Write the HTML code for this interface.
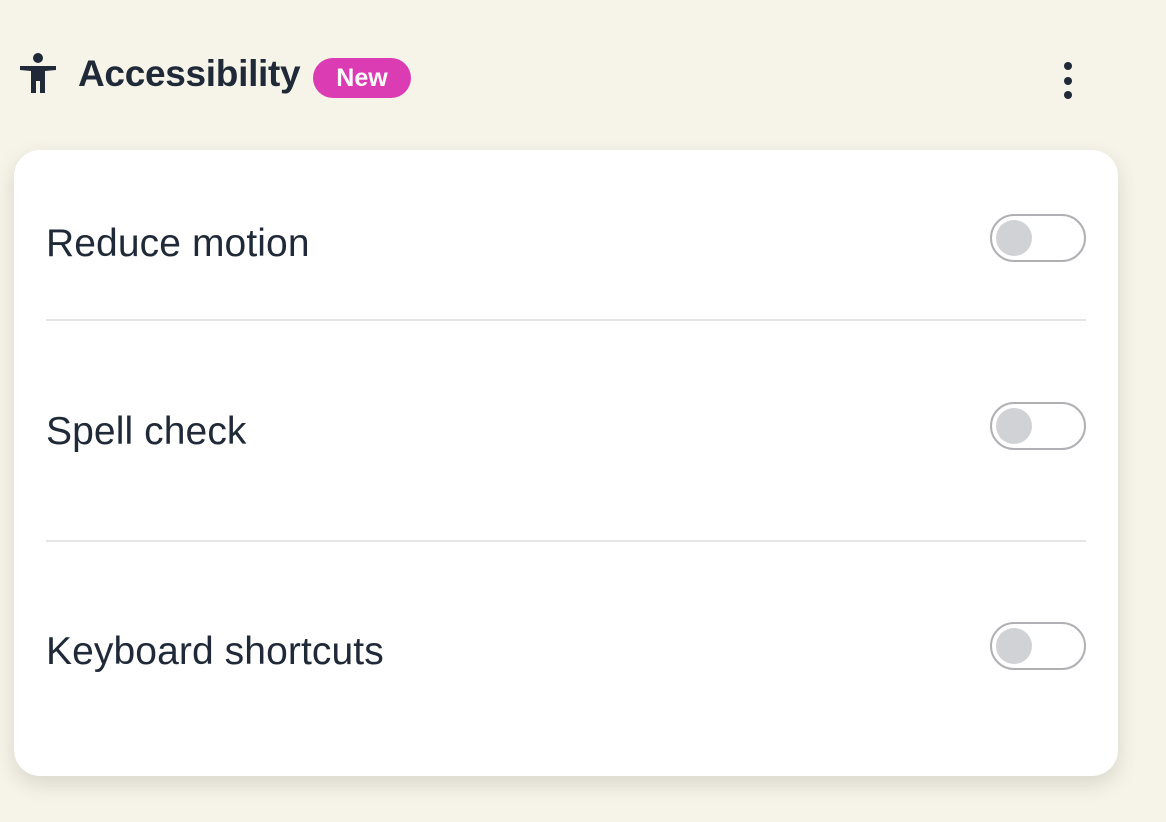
<!DOCTYPE html>
<html><head><style>
body{margin:0;width:1166px;height:822px;background:#f6f4e8;font-family:"Liberation Sans",sans-serif;color:#1f2937;position:relative;overflow:hidden}
.t{position:absolute;left:78px;top:53px;font-size:37px;font-weight:600;letter-spacing:-0.3px}
.badge{position:absolute;left:313px;top:58px;width:98px;height:40px;border-radius:20px;background:#db3cb4;color:#fff;font-size:25px;font-weight:700;text-align:center;line-height:40px}
.card{position:absolute;left:14px;top:150px;width:1104px;height:626px;background:#fff;border-radius:26px;box-shadow:0 8px 22px rgba(0,0,0,.12)}
.lbl{position:absolute;left:46px;font-size:39px;color:#1f2937;letter-spacing:0.1px}
.tg{position:absolute;left:990px;width:92px;height:44px;border:2px solid #b0b0b4;border-radius:24px;background:#fff}
.tg::after{content:"";position:absolute;left:4px;top:4px;width:36px;height:36px;border-radius:50%;background:#d1d2d6}
.hr{position:absolute;left:46px;width:1040px;height:2px;background:#e5e5e5}
.dot{position:absolute;left:1064px;width:8px;height:8px;border-radius:50%;background:#1f2937}
</style></head><body>
<svg style="position:absolute;left:18px;top:52px" width="40" height="42" viewBox="0 0 40 42"><circle cx="20" cy="6" r="5" fill="#1f2937"/><path d="M2 14 L38 14 L38 18 L27 19 L27 41 L22 41 L22 29 L18 29 L18 41 L13 41 L13 19 L2 18 Z" fill="#1f2937"/></svg>
<div class="t">Accessibility</div>
<div class="badge">New</div>
<div class="dot" style="top:62px"></div><div class="dot" style="top:77px"></div><div class="dot" style="top:91px"></div>
<div class="card"></div>
<div class="lbl" style="top:222px">Reduce motion</div>
<div class="tg" style="top:214px"></div>
<div class="hr" style="top:319px"></div>
<div class="lbl" style="top:410px">Spell check</div>
<div class="tg" style="top:402px"></div>
<div class="hr" style="top:540px"></div>
<div class="lbl" style="top:630px">Keyboard shortcuts</div>
<div class="tg" style="top:622px"></div>
</body></html>
